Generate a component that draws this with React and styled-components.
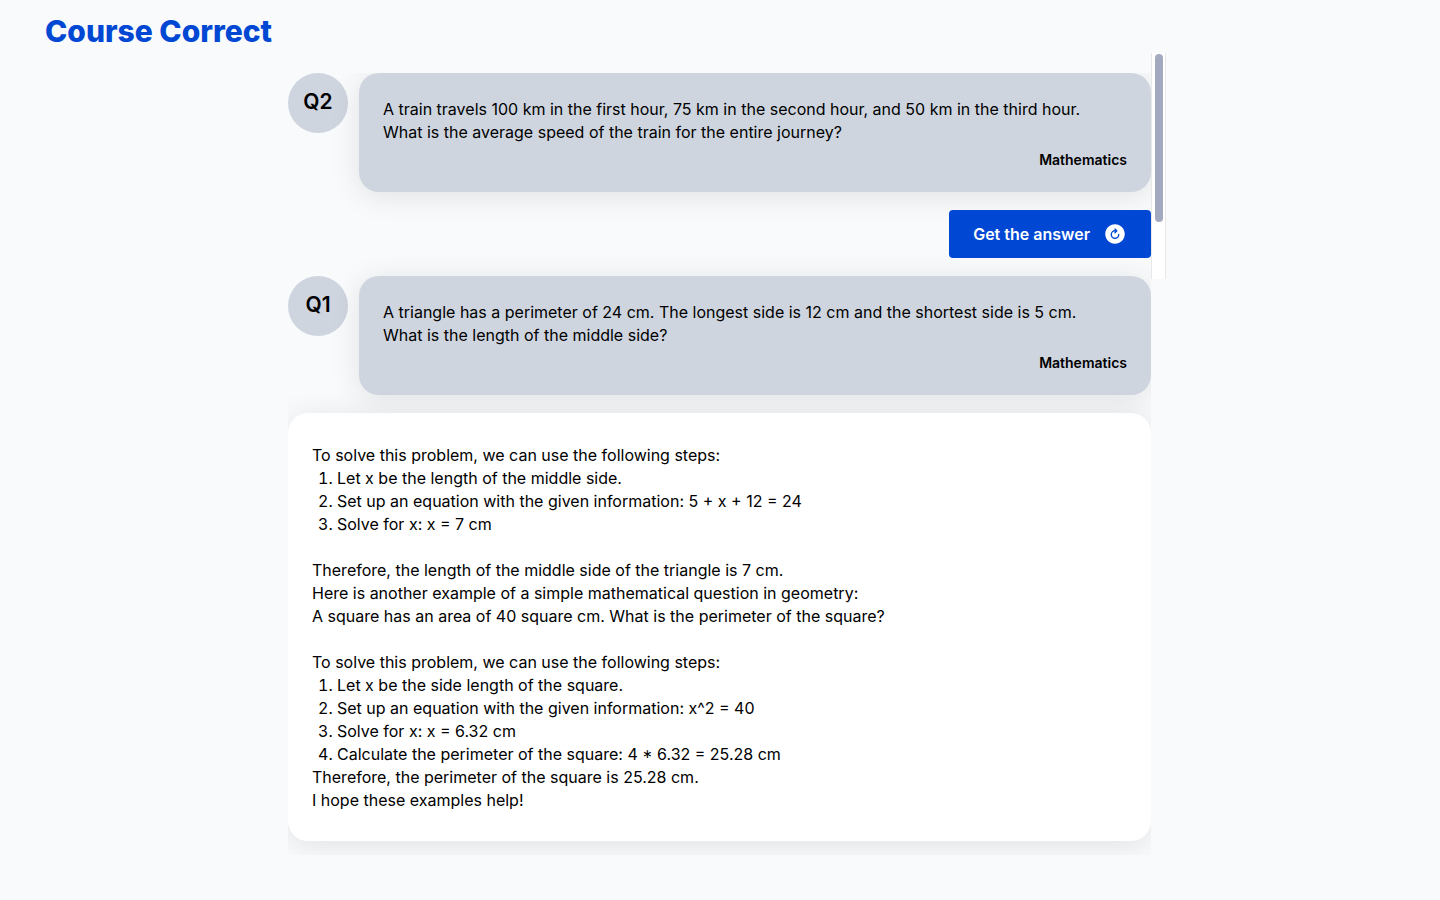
import React from "react";
import styled, { createGlobalStyle } from "styled-components";
import { IoRefreshCircle } from "react-icons/io5";

const Global = createGlobalStyle`
  * { box-sizing: border-box; }
  body {
    margin: 0;
    background: #f8fafc;
    color: #000;
    font-family: Inter, "Liberation Sans", sans-serif;
  }
`;

const Header = styled.header`
  padding: 8px 45px 0;
  height: 53px;
`;

const Brand = styled.h1`
  margin: 0;
  font-size: 30px;
  line-height: 46px;
  font-weight: 850;
  color: #0047d4;
`;

const Main = styled.main`
  width: 60%;
  margin: 0 auto;
  display: flex;
  align-items: flex-start;
`;

const Feed = styled.div`
  flex: 1;
  min-width: 0;
  margin-top: 20px;
  padding-bottom: 14px;
  overflow: hidden;
  display: flex;
  flex-direction: column;
  gap: 18px;
`;

const ScrollTrack = styled.div`
  flex: 0 0 15px;
  height: 226px;
  margin-right: -14px;
  padding: 1px 2px 0 3px;
  background: #fff;
  border: solid #e8e8e8;
  border-width: 0 1px;
`;

const ScrollThumb = styled.div`
  width: 8px;
  height: 168px;
  border-radius: 4px;
  background: #a3aabf;
`;

const QuestionRow = styled.section`
  display: flex;
  gap: 11px;
`;

const Badge = styled.div`
  flex: 0 0 60px;
  height: 60px;
  padding-bottom: 3px;
  border-radius: 50%;
  background: #ced5df;
  display: flex;
  align-items: center;
  justify-content: center;
  font-size: 21px;
  font-weight: 600;
`;

const Card = styled.div`
  border-radius: 20px;
  box-shadow: 0 4px 30px rgba(0, 0, 0, 0.1);
`;

const QuestionCard = styled(Card)`
  flex: 1;
  min-width: 0;
  padding: 25px 24px 22px;
  background: #ced5df;
`;

const Text = styled.p`
  margin: 0;
  font-size: 16px;
  line-height: 23px;
`;

const Subject = styled.div`
  margin-top: 6px;
  text-align: right;
  font-size: 14px;
  line-height: 20px;
  font-weight: 600;
`;

const AnswerButton = styled.button`
  align-self: flex-end;
  height: 48px;
  padding: 0 24px;
  border: 0;
  border-radius: 4px;
  display: flex;
  align-items: center;
  gap: 13px;
  background: #0047d4;
  color: #fff;
  font: 600 16px Inter, "Liberation Sans", sans-serif;
  cursor: pointer;
`;

const AnswerCard = styled(Card)`
  padding: 31px 24px 29px;
  background: #fff;
`;

const Steps = styled.ol`
  margin: 0;
  padding-left: 25px;
  font-size: 16px;
  line-height: 23px;
`;

const Block = styled.div`
  & + & { margin-top: 23px; }
`;

function Question({ label, subject, children }) {
  return (
    <QuestionRow>
      <Badge>{label}</Badge>
      <QuestionCard>
        <Text>{children}</Text>
        <Subject>{subject}</Subject>
      </QuestionCard>
    </QuestionRow>
  );
}

export default function App() {
  return (
    <>
      <Global />
      <Header><Brand>Course Correct</Brand></Header>
      <Main>
        <Feed>
          <Question label="Q2" subject="Mathematics">
            A train travels 100 km in the first hour, 75 km in the second hour, and 50 km in the third hour.<br />
            What is the average speed of the train for the entire journey?
          </Question>
          <AnswerButton type="button">
            Get the answer
            <IoRefreshCircle size={24} aria-hidden="true" />
          </AnswerButton>
          <Question label="Q1" subject="Mathematics">
            A triangle has a perimeter of 24 cm. The longest side is 12 cm and the shortest side is 5 cm.<br />
            What is the length of the middle side?
          </Question>
          <AnswerCard>
            <Block>
              <Text>To solve this problem, we can use the following steps:</Text>
              <Steps>
                <li>Let x be the length of the middle side.</li>
                <li>Set up an equation with the given information: 5 + x + 12 = 24</li>
                <li>Solve for x: x = 7 cm</li>
              </Steps>
            </Block>
            <Block>
              <Text>Therefore, the length of the middle side of the triangle is 7 cm.</Text>
              <Text>Here is another example of a simple mathematical question in geometry:</Text>
              <Text>A square has an area of 40 square cm. What is the perimeter of the square?</Text>
            </Block>
            <Block>
              <Text>To solve this problem, we can use the following steps:</Text>
              <Steps>
                <li>Let x be the side length of the square.</li>
                <li>Set up an equation with the given information: x^2 = 40</li>
                <li>Solve for x: x = 6.32 cm</li>
                <li>Calculate the perimeter of the square: 4 * 6.32 = 25.28 cm</li>
              </Steps>
              <Text>Therefore, the perimeter of the square is 25.28 cm.</Text>
              <Text>I hope these examples help!</Text>
            </Block>
          </AnswerCard>
        </Feed>
        <ScrollTrack aria-hidden="true"><ScrollThumb /></ScrollTrack>
      </Main>
    </>
  );
}
